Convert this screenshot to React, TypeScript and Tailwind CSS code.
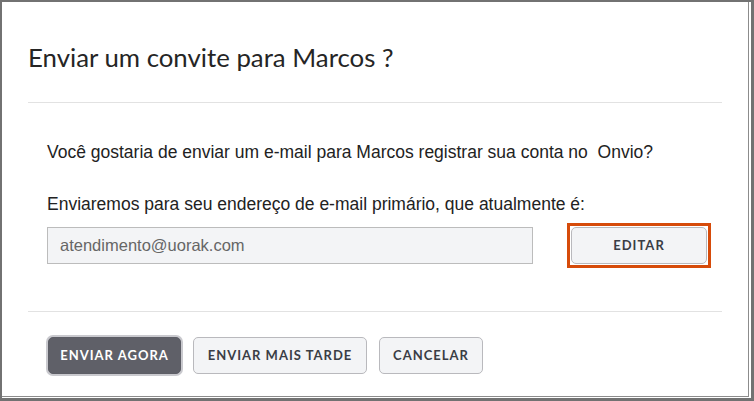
import React from "react";

const btnBase =
    "h-[37px] rounded-[5px] border text-[13px] font-bold tracking-[1px] uppercase [font-family:Lato,'Noto_Sans',sans-serif]";
const btnLight = "border-[#b9b9bd] bg-[#f3f4f6] text-[#3a3d45]";

export default function App() {
    return (
        <div className="h-[401px] w-[754px] bg-white border-l-2 border-t-2 border-r-[3px] border-b-[3px] border-[#727272]">
            <div className="h-full w-[748px] pr-px pb-px">
                <div className="h-full border-r border-b border-[#8c8c8c] bg-white">
                    {/* Título */}
                    <div className="px-[26px] pt-[37px] pb-[27px]">
                        <h2 className="text-[25.8px] leading-[36px] text-[#252525] [font-family:Lato,sans-serif]">
                            Enviar um convite para Marcos ?
                        </h2>
                    </div>
                    <div className="mx-[26px] h-px bg-[#e2e2e2]" />

                    {/* Corpo */}
                    <div className="pl-[45px] pr-[20px] pt-[37px] pb-[43px] [font-family:'Liberation_Sans',Arial,sans-serif] text-[17.5px] text-[#222]">
                        <p className="leading-[24px]">
                            Você gostaria de enviar um e-mail para Marcos registrar sua conta no&nbsp; Onvio?
                        </p>
                        <p className="mt-[28px] leading-[24px]">
                            Enviaremos para seu endereço de e-mail primário, que atualmente é:
                        </p>
                        <div className="mt-[7px] flex items-center">
                            <div className="flex h-[37px] w-[486px] items-center border border-[#bcbcbc] bg-[#f3f4f6] px-3 text-[16.5px] text-[#666]">
                                atendimento@uorak.com
                            </div>
                            <div className="ml-[34px] border-[3px] border-[#d64b0a] p-px">
                                <button className={`${btnBase} ${btnLight} w-[136px]`}>
                                    Editar
                                </button>
                            </div>
                        </div>
                    </div>
                    <div className="mx-[26px] h-px bg-[#e2e2e2]" />

                    {/* Ações */}
                    <div className="flex items-center pl-[44px] pt-[23px]">
                        <div className="rounded-[7px] bg-[#c9c9ce] p-[2px]">
                            <button className={`${btnBase} h-[35px] w-[133px] border-[#5d5e66] bg-[#5f6068] text-white`}>
                                Enviar agora
                            </button>
                        </div>
                        <button className={`${btnBase} ${btnLight} ml-[10px] w-[174px]`}>
                            Enviar mais tarde
                        </button>
                        <button className={`${btnBase} ${btnLight} ml-[12px] w-[104px]`}>
                            Cancelar
                        </button>
                    </div>
                </div>
            </div>
        </div>
    );
}
